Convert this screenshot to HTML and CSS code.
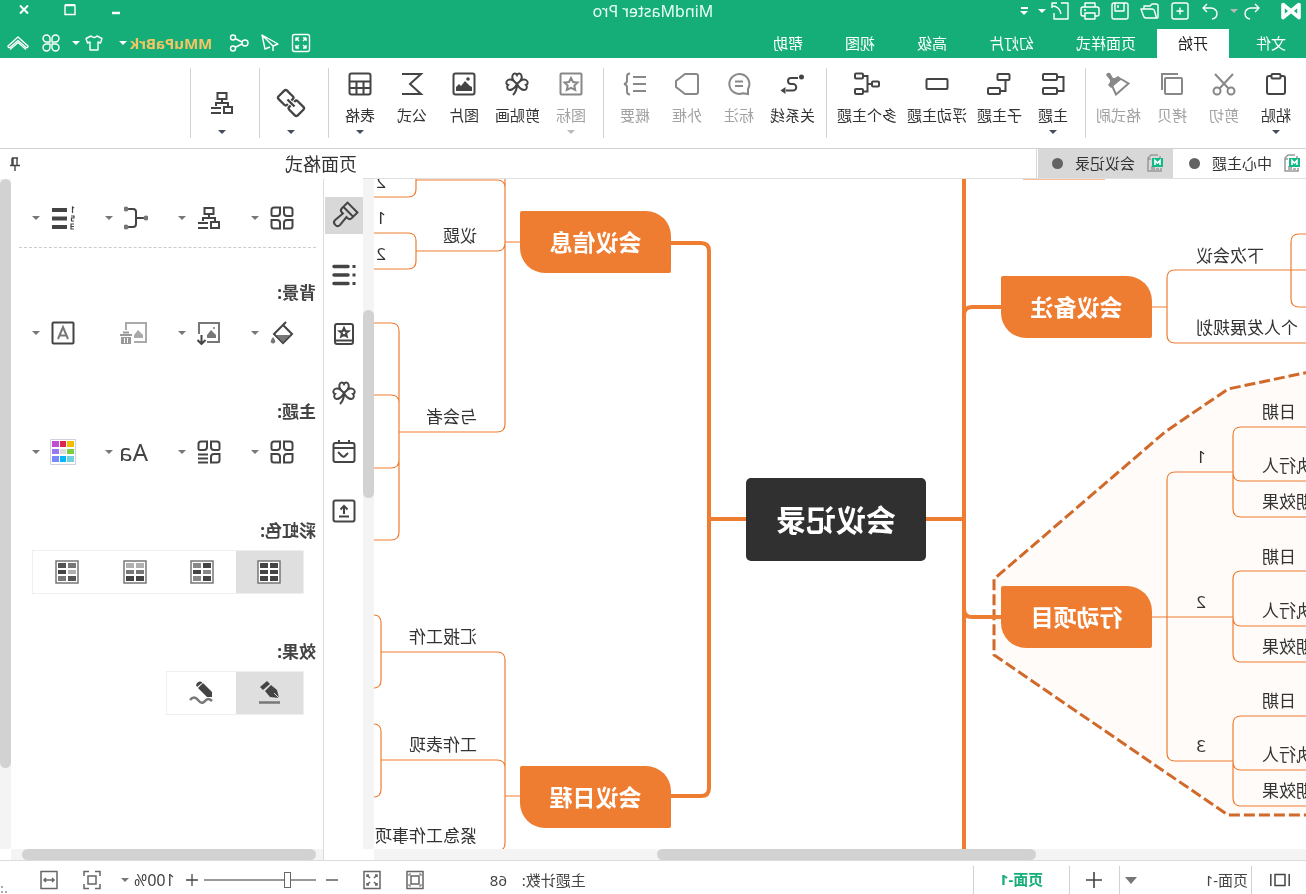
FILE: index.html
```html
<!DOCTYPE html>
<html lang="zh-CN">
<head>
<meta charset="utf-8">
<title>MindMaster Pro</title>
<link rel="stylesheet" href="styles.css">
</head>
<body>
<svg class="defs" aria-hidden="true">
  <symbol id="clover" viewBox="0 0 24 24"><path d="M12 12C8 9 6.500 6.500 7.500 3.500 8.500 1 11 1 12 3c1-2 3.500-2 4.500.5C17.500 6.500 16 9 12 12zM12 12C8.500 8 5.500 6.500 3 8c-2.500 1.500-2 4.500 0 5-1.500 1.500-1 4.500 1.500 5C8 18 10 16 12 12zM12 12c3.500-4 6.500-5.500 9-4 2.500 1.500 2 4.500 0 5 1.500 1.500 1 4.500-1.500 5-3.500 0-5.500-2-7.500-6zM12 12c0 4 1 8 4 11"/></symbol>
  <symbol id="structure" viewBox="0 0 24 24"><rect x="7.500" y="2" width="9" height="6"/><path d="M12 8v4M6 15v-3h12v3M13 17h10M13 22h10"/><rect x="2" y="16" width="8" height="6"/></symbol>
  <symbol id="squares" viewBox="0 0 24 24"><path d="M4 1.500h6V7a3 3 0 0 1-3 3H3Q1.500 10 1.500 8.500V4Q1.500 1.500 4 1.500zM14 1.500h6q2.500 0 2.500 2.500v4.500q0 1.500-1.500 1.500h-4a3 3 0 0 1-3-3zM1.500 14H7a3 3 0 0 1 3 3v5.500H4q-2.500 0-2.500-2.500zM17 14h5.500v6q0 2.500-2.500 2.500h-6V17a3 3 0 0 1 3-3z"/></symbol>
  <symbol id="docfile" viewBox="0 0 16 18"><path d="M5 1h7l3 3v13H2v-3M4 15h3M8 13h4M8 15h4M12 5h3M3 4V2" fill="none" stroke="#999" stroke-width="1.500"/><path d="M0 4h11v9H0z" fill="#12b886" stroke="none"/><path d="M3 11V6.500l2.500 2.500L8 6.500V11" fill="none" stroke="#fff" stroke-width="1.600"/></symbol>
</svg>
<div class="app">
  <header class="titlebar">
    <div class="quick">
      <svg class="logo" viewBox="0 0 22 20"><path d="M3 16.500v-13l16 13v-13l-16 13z" fill="none" stroke="#fff" stroke-width="3.600" stroke-linejoin="round"/></svg>
      <div class="pair">
        <button class="qb" aria-label="撤销"><svg viewBox="0 0 20 20"><path d="M7 3L3 7l4 4M3 7h8a6 5.500 0 0 1 6 5.500c0 3-2 5-5 5.500"/></svg></button>
        <i class="caret dim"></i>
      </div>
      <button class="qb" aria-label="重做"><svg viewBox="0 0 20 20"><path d="M13 3l4 4-4 4M17 7H9a6 5.500 0 0 0-6 5.500c0 3 2 5 5 5.500"/></svg></button>
      <button class="qb" aria-label="新建"><svg viewBox="0 0 20 20"><rect x="2" y="2" width="16" height="16" rx="2"/><path d="M10 6.500v7M6.500 10h7"/></svg></button>
      <button class="qb" aria-label="打开"><svg viewBox="0 0 20 20"><path d="M2 16V5q0-2 2-2h4l2 2h6v3M2 16q0 1 1 1h11q2 0 2.500-2L19 8H8q-2 0-2.500 2L3.500 17"/></svg></button>
      <button class="qb" aria-label="保存"><svg viewBox="0 0 20 20"><path d="M4 2h12q2 0 2 2v12q0 2-2 2H4q-2 0-2-2V4q0-2 2-2zM6 2v8h9V2M12 4v3"/></svg></button>
      <button class="qb" aria-label="打印"><svg viewBox="0 0 20 20"><path d="M5 6V2h10v4M5 15H3q-2 0-2-2V8q0-2 2-2h14q2 0 2 2v5q0 2-2 2h-2M5 12h10v6H5zM14 9h2"/></svg></button>
      <div class="pair">
        <button class="qb" aria-label="导出"><svg viewBox="0 0 20 20"><path d="M9 2H2v16h14v-6M18 5c-6 0-8 3-9 8M13 2h5v5"/></svg></button>
        <i class="caret"></i>
      </div>
      <button class="more" aria-label="自定义"><i class="caret"></i></button>
    </div>
    <h1 class="title">MindMaster Pro</h1>
    <div class="winctl">
      <button aria-label="最小化"><svg viewBox="0 0 12 12"><path d="M2 9h8" stroke-width="2.500"/></svg></button>
      <button aria-label="最大化"><svg viewBox="0 0 12 12"><path d="M1 1.500h10v9H1z"/><path d="M1 1h10" stroke-width="2"/></svg></button>
      <button aria-label="关闭"><svg viewBox="0 0 12 12"><path d="M2 1.500l8 8M10 1.500l-8 8" stroke-width="2"/></svg></button>
    </div>
  </header>
  <nav class="menubar">
    <button class="tab file">文件</button><button class="tab on">开始</button><button class="tab">页面样式</button><button class="tab">幻灯片</button><button class="tab">高级</button><button class="tab">视图</button><button class="tab">帮助</button>
    <div class="account">
      <button class="qb" aria-label="全屏"><svg viewBox="0 0 20 20"><rect x="1.500" y="1.500" width="17" height="17" rx="2"/><path d="M5 8V5h3M12 5h3v3M15 12v3h-3M8 15H5v-3M5 5l3 3M15 5l-3 3M15 15l-3-3M5 15l3-3"/></svg></button>
      <button class="qb" aria-label="发送"><svg viewBox="0 0 20 20"><path d="M18 2L2 11l5 2zM18 2l-3 14-5-2M7 13v5"/></svg></button>
      <button class="qb" aria-label="分享"><svg viewBox="0 0 20 20"><circle cx="4" cy="10" r="3"/><circle cx="16" cy="4.500" r="2.500"/><circle cx="16" cy="15.500" r="2.500"/><path d="M7 9l7-3.500M7 11l7 3.500"/></svg></button>
      <button class="user">MMuPaBrk<i class="caret"></i></button>
      <button class="qb skin" aria-label="皮肤"><svg viewBox="0 0 20 20"><path d="M7 3L2 5.500 3.500 10 6 9v8h8V9l2.500 1L18 5.500 13 3q-3 3-6 0z"/></svg><i class="caret"></i></button>
      <button class="qb" aria-label="应用"><svg viewBox="0 0 20 20"><path d="M9 9H5.500A3.500 3.500 0 1 1 9 5.500zM11 9V5.500A3.500 3.500 0 1 1 14.500 9zM9 11v3.500A3.500 3.500 0 1 1 5.500 11zM11 11h3.500a3.500 3.500 0 1 1-3.500 3.500z"/></svg></button>
      <button class="qb" aria-label="收起"><svg class="wide" viewBox="0 0 24 20"><path d="M2 13L12 4l10 9q0 2-2 1.500l-8-7-8 7Q2 15 2 13z"/><path d="M4 16.500l8-7 8 7"/></svg></button>
    </div>
  </nav>

  <div class="ribbon">
    <button class="tool"><svg viewBox="0 0 24 24"><rect x="3" y="4" width="18" height="18" rx="2"/><rect x="7.500" y="2" width="9" height="4.500" rx="1" fill="#fff"/></svg>粘贴<i class="caret"></i></button>
    <button class="tool" disabled><svg viewBox="0 0 24 24"><circle cx="5" cy="19" r="3.500"/><circle cx="19" cy="19" r="3.500"/><path d="M7.500 16.500L21 2M16.500 16.500L3 2"/></svg>剪切</button>
    <button class="tool" disabled><svg viewBox="0 0 24 24"><rect x="2" y="6" width="17" height="16" rx="1"/><path d="M6 2h16v16"/></svg>拷贝</button>
    <button class="tool" disabled><svg viewBox="0 0 24 24"><path d="M9 7L1.500 11.500 14 22.500l4.500-10"/><path d="M8 7l4-3 3 2 2 0 3-5q3-1 4 2l-4 5 0 2 2 3-3 3z" class="fill"/></svg>格式刷</button>
    <i class="sep"></i>
    <button class="tool"><svg viewBox="0 0 24 24"><rect x="8" y="2" width="14" height="6" rx="1"/><rect x="8" y="16" width="14" height="6" rx="1"/><path d="M8 5H1.500v14H8"/></svg>主题<i class="caret"></i></button>
    <button class="tool"><svg viewBox="0 0 24 24"><rect x="1.500" y="2" width="12" height="6" rx="1"/><rect x="11" y="16" width="12" height="6" rx="1"/><path d="M5.500 8v11H11"/></svg>子主题</button>
    <button class="tool"><svg viewBox="0 0 24 24"><rect x="1.500" y="7" width="21" height="10" rx="1"/></svg>浮动主题</button>
    <button class="tool"><svg class="spread" viewBox="-1 0 26 24"><rect x="0" y="9.500" width="7" height="5" rx="1"/><rect x="16" y="1.500" width="8" height="5" rx="1"/><rect x="16" y="17" width="8" height="5" rx="1"/><path d="M7 12h4M16 4h-4.500v15.500H16"/></svg>多个主题</button>
    <i class="sep"></i>
    <button class="tool"><svg viewBox="0 0 24 24"><path d="M6 6h7a3 3 0 0 1 0 6h-2a3.200 3.200 0 0 0 0 6.500h7"/><circle cx="2.500" cy="5" r="2.500" class="fill"/><path d="M18.500 15l5 3.500-5 3.500z" class="fill"/></svg>关系线</button>
    <button class="tool" disabled><svg viewBox="0 0 24 24"><path d="M3 22v-5a10 10 0 1 1 5 4.300zM8 9.500h8M8 14h8"/></svg>标注</button>
    <button class="tool" disabled><svg viewBox="0 0 24 24"><path d="M3 2h11l9 7v6l-9 7H3q-2 0-2-2V4q0-2 2-2z"/></svg>外框</button>
    <button class="tool" disabled><svg viewBox="0 0 24 24"><path d="M1 5h13M1 12h13M1 19h13M17 1.500q3 0 3 3v4q0 3 3 3.500-3 .5-3 3.500v4q0 3-3 3"/></svg>概要</button>
    <i class="sep"></i>
    <button class="tool" disabled><svg viewBox="0 0 24 24"><rect x="1.500" y="1.500" width="21" height="21" rx="1"/><path d="M12 6l2 4 4.500.5-3.200 3 .9 4.500-4.200-2.200L7.800 18l.9-4.500-3.200-3L10 10z"/></svg>图标<i class="caret"></i></button>
    <button class="tool"><svg><use href="#clover"/></svg>剪贴画</button>
    <button class="tool"><svg viewBox="0 0 24 24"><rect x="1.500" y="1.500" width="21" height="21" rx="2"/><path d="M4 19v-4l2-1 5-5 4 5 2-2 3 3v4z" class="fill"/><circle cx="8" cy="7" r="1.800" class="fill"/></svg>图片</button>
    <button class="tool"><svg viewBox="0 0 24 24"><path d="M22 2H3l11 10L3 22h19"/></svg>公式</button>
    <button class="tool"><svg viewBox="0 0 24 24"><rect x="1.500" y="1.500" width="21" height="21" rx="2"/><path d="M1.500 9.500h21M1.500 16h21M8.500 9.500V22M15.500 9.500V22"/></svg>表格<i class="caret"></i></button>
    <i class="sep"></i>
    <button class="tool big" aria-label="链接"><svg viewBox="0 0 24 24"><g transform="rotate(-45 12 12)"><path d="M10.500 14v2q0 2-2 2H.5q-2 0-2-2V8q0-2 2-2h8q2 0 2 2v1M13.500 10V8q0-2 2-2h8q2 0 2 2v8q0 2-2 2h-8q-2 0-2-2v-1M7 12h10" stroke-width="2.300"/></g></svg><i class="caret"></i></button>
    <i class="sep"></i>
    <button class="tool big" aria-label="布局"><svg><use href="#structure"/></svg><i class="caret"></i></button>
    <i class="sep"></i>
  </div>

  <main class="main">
    <section class="work">
      <div class="docs">
        <button class="doc first"><svg><use href="#docfile"/></svg>中心主题<i class="dot"></i></button>
        <button class="doc on"><svg><use href="#docfile"/></svg>会议记录<i class="dot"></i></button>
      </div>
      <div class="view">
        <div class="canvas">
          <svg class="links" viewBox="0 179 932 670">
            <path class="zone" d="M-8 371L78 389 141 432 312 579V655L78 815H-8"/>
            <g class="thin">
              <path d="M154 307H139M-8 270H131q8 0 8 8V335q0 8-8 8H-8M-8 234H7q8 0 8 8v57q0 8-8 8H-8"/>
              <path d="M154 617H73M73 472h58q8 0 8 8V753q0 8-8 8H73"/>
              <path d="M-8 427H65q8 0 8 8v74q0 8-8 8H-8M73 473q0 8-8 8H-8"/>
              <path d="M-8 571H65q8 0 8 8v75q0 8-8 8H-8M73 618q0 8-8 8H-8"/>
              <path d="M-8 716H65q8 0 8 8v74q0 8-8 8H-8M73 762q0 8-8 8H-8"/>
              <path d="M786 242h15M801 170V424q0 8 8 8h98M801 188q0-8 8-8h81M801 243q0 8 8 8h81"/>
              <path d="M890 170v19q0 8 8 8h34M932 233h-34q-8 0-8 8v20q0 8 8 8h34"/>
              <path d="M932 323h-17q-8 0-8 8V532q0 8 8 8h17M932 395h-17q-8 0-8 8M932 468h-17q-8 0-8-8"/>
              <path d="M786 796h15M925 652H809q-8 0-8 8V843q0 8 8 8M925 760H809q-8 0-8 8"/>
              <path d="M932 615q-7 0-7 8v57q0 8 7 8M932 724q-7 0-7 8v57q0 8 7 8M201 179h82"/>
            </g>
            <g class="trunk">
              <path d="M380 519H342M342 170V860M342 315q0-8-8-8H305M342 609q0 8-8 8H305"/>
              <path d="M560 519h37M635 243h-30q-8 0-8 8V788q0 8 8 8h30"/>
            </g>
          </svg>
          <div class="root">会议记录</div>
          <div class="node n1">会议备注</div>
          <div class="node n2">行动项目</div>
          <div class="node n3">会议信息</div>
          <div class="node n4">会议日程</div>
          <span class="leaf east e1">下次会议</span>
          <span class="leaf east e2">个人发展规划</span>
          <span class="leaf num a0">1</span><span class="leaf num b0">2</span><span class="leaf num c0">3</span>
          <span class="leaf far a1">日期</span><span class="leaf far a2">执行人</span><span class="leaf far a3">预期效果</span>
          <span class="leaf far b1">日期</span><span class="leaf far b2">执行人</span><span class="leaf far b3">预期效果</span>
          <span class="leaf far c1">日期</span><span class="leaf far c2">执行人</span><span class="leaf far c3">预期效果</span>
          <span class="leaf idx i1">2</span><span class="leaf idx i2">1</span><span class="leaf idx i3">2</span>
          <span class="leaf west w1">议题</span>
          <span class="leaf west w2">与会者</span>
          <span class="leaf west w3">汇报工作</span>
          <span class="leaf west w4">工作表现</span>
          <span class="leaf west w5">紧急工作事项</span>
        </div>
        <div class="vbar"><i class="vt1"></i></div>
        <div class="hbar"><i class="ht1"></i></div>
      </div>
    </section>

    <aside class="panel">
      <header class="phead"><h2>页面格式</h2>
        <button class="pin" aria-label="固定"><svg viewBox="0 0 12 14"><path d="M3 1h6M4 1v7M8 1v7M9 1v7M1 8.500h10M6 9v5"/></svg></button>
      </header>
      <div class="pbody">
        <div class="rail">
          <button class="on" aria-label="格式"><svg viewBox="0 0 24 24"><g transform="rotate(-45 12 12)"><path d="M5 0h14v8q0 3-3 3h-1.500l1 10q0 3.500-3.500 3.500T8.500 21l1-10H8q-3 0-3-3zM5 6h14"/></g></svg></button>
          <button aria-label="大纲"><svg viewBox="0 0 24 24"><path d="M8 3.500h14M8 12h14M8 20.500h14" stroke-width="3.500" stroke-linecap="round"/><path d="M.5 3.500h3M.5 12h3M.5 20.500h3" stroke-width="3"/></svg></button>
          <button aria-label="图标"><svg viewBox="0 0 24 24"><rect x="3" y="2" width="18" height="20" rx="2"/><path d="M3 18.500h18"/><path d="M12 6l1.300 3 3.200.3-2.500 2 .8 3.200-2.800-1.700-2.800 1.700.8-3.200-2.500-2 3.200-.3z"/></svg></button>
          <button aria-label="剪贴画"><svg><use href="#clover"/></svg></button>
          <button aria-label="任务"><svg viewBox="0 0 24 24"><rect x="1.500" y="3" width="21" height="19" rx="2"/><path d="M1.500 8h21M7 0v4M17 0v4M6 12l4 4q1.500 1.500 3 0l3-3" transform="matrix(-1 0 0 1 24 0)"/></svg></button>
          <button aria-label="导出"><svg viewBox="0 0 24 24"><rect x="1.500" y="1.500" width="21" height="21" rx="2"/><path d="M7 17.500h10M12 15V8M8.500 10.500L12 7l3.500 3.500"/></svg></button>
        </div>
        <div class="props">
          <div class="scroll">
          <div class="row top">
            <button class="opt" aria-label="布局样式"><svg><use href="#squares"/></svg><i class="caret"></i></button>
            <button class="opt" aria-label="结构"><svg><use href="#structure"/></svg><i class="caret"></i></button>
            <button class="opt" aria-label="连线"><svg viewBox="0 0 24 24"><path d="M4 12h8M20 3h-5q-3 0-3 3v12q0 3 3 3h5"/><circle cx="2" cy="12" r="2.500" class="grey"/><circle cx="22" cy="3" r="2.500" class="grey"/><circle cx="22" cy="21" r="2.500" class="grey"/></svg><i class="caret"></i></button>
            <button class="opt" aria-label="编号"><svg viewBox="0 0 24 24"><path d="M8 4h15M8 12.500h15M8 21h15" stroke-width="4"/><path d="M1 2l1.500-1v6M4 10H1v2h2.500v3H1M1 18h3v5H1M1 20.500h3" stroke-width="1.200"/></svg><i class="caret"></i></button>
          </div>
          <h3>背景:</h3>
          <div class="row">
            <button class="opt" aria-label="填充"><svg viewBox="0 0 24 24"><path d="M10 3l10 10-9 9-9-9 9-9M8 1l4 4"/><path d="M4 14h14l-7 7z" class="grey"/><path d="M21 16q3 4 2 5.500-2 2-4 0-1-2 2-5.500z" class="grey"/></svg><i class="caret"></i></button>
            <button class="opt" aria-label="图片背景"><svg viewBox="0 0 24 24"><path d="M14 21H2V2h20v11" stroke="#777"/><path d="M5 17v-3l5-5 4 5v3z" class="grey"/><circle cx="7" cy="7" r="1" class="grey"/><path d="M19.500 14v9M15.500 19l4 4 4-4"/></svg><i class="caret"></i></button>
            <button class="opt" disabled aria-label="删除背景"><svg class="trash" viewBox="0 0 28 24"><path d="M14 21H2V2h20v7" stroke="#aaa"/><path d="M5 17v-3l5-5 4 5v3z" class="pale"/><path d="M16 14h12M19 11.500h6"/><path d="M17 16h10v7H17z" class="fill"/><path d="M20.500 17v5M23.500 17v5" stroke="#fff" stroke-width="1"/></svg></button>
            <button class="opt" aria-label="水印"><svg viewBox="0 0 24 24"><rect x="1.500" y="1.500" width="21" height="21" rx="1"/><path d="M7 18l5-12 5 12M8.500 14.500h7" stroke="#777"/></svg><i class="caret"></i></button>
          </div>
          <h3>主题:</h3>
          <div class="row">
            <button class="opt" aria-label="主题"><svg><use href="#squares"/></svg><i class="caret"></i></button>
            <button class="opt" aria-label="主题样式"><svg viewBox="0 0 24 24"><path d="M4 1.500h6V7a3 3 0 0 1-3 3H3Q1.500 10 1.500 8.500V4Q1.500 1.500 4 1.500zM14 1.500h6q2.500 0 2.500 2.500v4.500q0 1.500-1.500 1.500h-4a3 3 0 0 1-3-3zM1.500 14H7a3 3 0 0 1 3 3v5.500H4q-2.500 0-2.500-2.500zM13 14.500h10M13 18.500h10M13 22.500h10"/></svg><i class="caret"></i></button>
            <button class="opt font"><span>Aa</span><i class="caret"></i></button>
            <button class="opt" aria-label="颜色"><svg class="palette" viewBox="0 0 26 26"><path d="M.5.5h25v25H.5z" fill="#fff" stroke="#ccd0e0" stroke-width="1"/><g stroke="none"><path fill="#f0c000" d="M2 2h7v6H2z"/><path fill="#dc2850" d="M10 2h6v6h-6z"/><path fill="#c050d0" d="M17 2h7v6h-7z"/><path fill="#78d040" d="M2 10h7v5H2z"/><path fill="#ddd" d="M10 10h6v5h-6z"/><path fill="#9878f0" d="M17 10h7v5h-7z"/><path fill="#70d0e0" d="M2 17h7v6H2z"/><path fill="#00b8f8" d="M10 17h6v6h-6z"/><path fill="#7888ff" d="M17 17h7v6h-7z"/></g></svg><i class="caret"></i></button>
          </div>
          <h3>彩虹色:</h3>
          <div class="seg">
            <button class="on" aria-label="彩虹色一"><svg viewBox="0 0 24 24"><path class="frame" d="M1 1h22v22H1z"/><g stroke="none" fill="#444"><path d="M3 3h8v5H3zM13 3h8v5h-8zM3 10h8v4H3zM13 10h8v4h-8zM3 16h8v5H3zM13 16h8v5h-8z"/></g></svg></button>
            <button aria-label="彩虹色二"><svg viewBox="0 0 24 24"><path class="frame" d="M1 1h22v22H1z"/><g stroke="none"><path fill="#444" d="M3 3h8v5H3zM13 10h8v4h-8zM3 16h8v5H3z"/><path fill="#888" d="M13 3h8v5h-8zM3 10h8v4H3zM13 16h8v5h-8z"/></g></svg></button>
            <button aria-label="彩虹色三"><svg viewBox="0 0 24 24"><path class="frame" d="M1 1h22v22H1z"/><g stroke="none"><path fill="#b0b0b0" d="M3 3h8v5H3zM13 3h8v5h-8z"/><path fill="#777" d="M3 10h8v4H3zM13 10h8v4h-8z"/><path fill="#444" d="M3 16h8v5H3zM13 16h8v5h-8z"/></g></svg></button>
            <button aria-label="彩虹色四"><svg viewBox="0 0 24 24"><path class="frame" d="M1 1h22v22H1z"/><g stroke="none"><path fill="#777" d="M3 3h8v5H3zM13 16h8v5h-8z"/><path fill="#b0b0b0" d="M3 10h8v4H3z"/><path fill="#555" d="M13 3h8v5h-8zM3 16h8v5H3z"/><path fill="#444" d="M13 10h8v4h-8z"/></g></svg></button>
          </div>
          <h3 class="fx">效果:</h3>
          <div class="seg">
            <button class="on" aria-label="钢笔"><svg viewBox="0 0 24 24"><path d="M2 17l2-8 6-5 6 6-5 6z" class="fill"/><path d="M11 3l3-3 7 6-3 3z" class="fill"/><path d="M2 17l5-5" stroke="#e0e0e0" stroke-width="1"/><path d="M1 21.500h21" stroke="#777" stroke-width="2.500"/></svg></button>
            <button aria-label="手绘"><svg viewBox="0 0 24 24"><path d="M1 16v-5l9-9 5 5-9 9z" class="fill"/><path d="M11 1q4-2 6 3l-1 2-5-4z" class="fill"/><path d="M1 20q4-4 7 0t7-1 8 0" stroke="#777" stroke-width="2.500"/></svg></button>
          </div>
          </div>
          <div class="vbar"><i class="vt2"></i></div>
          <div class="hbar"><i class="ht2"></i></div>
        </div>
      </div>
    </aside>
  </main>

  <footer class="status">
    <button class="pageicon" aria-label="页面"><svg viewBox="0 0 20 14"><path d="M5 1.500h10v11H5zM.8 1v12M19.200 1v12"/></svg></button>
    <button class="pagesel">页面-1<i class="caret"></i></button>
    <button class="add" aria-label="添加页面"><svg viewBox="0 0 16 16"><path d="M8 0v16M0 8h16"/></svg></button>
    <button class="page">页面-1</button>
    <div class="count">主题计数: <span>68</span></div>
    <button class="sb" aria-label="适应页面"><svg viewBox="0 0 18 20"><rect x="1" y="1.500" width="16" height="17"/><rect x="5" y="6" width="8" height="8"/><path d="M3 6V4h2M13 4h2v2M15 14v2h-2M5 16H3v-2" stroke-width="1"/></svg></button>
    <button class="sb" aria-label="全屏显示"><svg viewBox="0 0 18 20"><rect x="1" y="1.500" width="16" height="17"/><path d="M4 7V5h2M12 5h2v2M14 13v2h-2M6 15H4v-2M4 5l3 3M14 5l-3 3M14 15l-3-3M4 15l3-3"/></svg></button>
    <button class="zoomb" aria-label="缩小"><svg viewBox="0 0 12 12"><path d="M0 6h12"/></svg></button>
    <input class="zoom" type="range" min="0" max="100" value="24" aria-label="缩放">
    <button class="zoomb" aria-label="放大"><svg viewBox="0 0 12 12"><path d="M0 6h12M6 0v12"/></svg></button>
    <button class="pct">100%<i class="caret"></i></button>
    <button class="sb" aria-label="居中"><svg viewBox="0 0 18 20"><path d="M1 6V1.500h5M12 1.500h5V6M17 14v4.500h-5M6 18.500H1V14"/><rect x="5" y="6" width="8" height="8"/></svg></button>
    <button class="sb last" aria-label="适应宽度"><svg viewBox="0 0 18 20"><rect x="1" y="1.500" width="16" height="17"/><path d="M4 10h10M6 8l-2 2 2 2M12 8l2 2-2 2"/></svg></button>
    <svg class="grip" viewBox="0 0 8 8"><path d="M5 0h2v2H5zM5 5h2v2H5zM1 5h2v2H1z" fill="#aaa"/></svg>
  </footer>
</div>
</body>
</html>
```
FILE: styles.css
```css
* { box-sizing: border-box; }
body {
  margin: 0;
  background: #fff;
  font-family: "Noto Sans", "Noto Sans CJK SC", sans-serif;
  font-size: 15px;
  line-height: 20px;
  color: #333;
}
button { font: inherit; color: inherit; background: none; border: 0; padding: 0; margin: 0; }
h1, h2, h3 { margin: 0; font-weight: 400; }
svg { display: block; fill: none; stroke: currentColor; stroke-width: 2; flex: none; }
.defs { position: absolute; width: 0; height: 0; }
.fill { fill: currentColor; stroke: none; }
.grey { fill: #777; stroke: none; }
.pale { fill: #aaa; stroke: none; }
.caret {
  display: block;
  flex: none;
  border: 4px solid transparent;
  border-top-color: currentColor;
  border-bottom: 0;
}

/* The whole window is shown flipped left to right. */
.app { height: 100vh; display: flex; flex-direction: column; transform: scaleX(-1); overflow: hidden; }

.titlebar { height: 29px; flex: none; display: grid; grid-template-columns: 1fr auto 1fr; background: #15ae78; color: #fff; }
.quick { display: flex; align-items: center; gap: 10px; padding: 0 0 7px 4px; }
.logo { width: 22px; height: 20px; margin-right: 8px; stroke: none; }
.pair { display: flex; align-items: center; gap: 4px; }
.qb svg { width: 20px; height: 20px; stroke-width: 1.4; stroke-linejoin: round; }
.qb svg.wide { width: 24px; }
.dim { color: #b9b9b9; }
.more { width: 7px; border-top: 2px solid #fff; padding-top: 2px; }
.title { font-size: 16px; line-height: 23px; color: #e8fff6; }
.winctl { display: flex; justify-content: flex-end; padding-right: 1px; }
.winctl button { width: 46px; height: 20px; display: grid; place-items: center; }
.winctl svg { width: 12px; height: 12px; stroke-width: 1.4; }

.menubar { height: 29px; flex: none; display: flex; background: #15ae78; color: #fff; }
.tab { padding: 0 21px 2px; height: 29px; }
.tab.file { padding: 0 27px 2px 20px; }
.tab.on { background: #fff; color: #222; }
.account { margin-left: auto; padding: 0 6px 1px 0; display: flex; align-items: center; gap: 11px; }
.user { display: flex; align-items: center; gap: 3px; margin: 0 4px 0 6px; font-weight: 700; color: #f5c563; }
.user .caret { color: #fff; }
.skin { display: flex; align-items: center; gap: 4px; }

.ribbon { height: 91px; flex: none; display: flex; align-items: flex-start; padding: 10px 0 0 4px; border-bottom: 1px solid #d2d2d2; color: #444; }
.tool { min-width: 52px; padding: 4px 5px 0; display: flex; flex-direction: column; align-items: center; white-space: nowrap; color: #333; }
.tool svg { width: 24px; height: 24px; margin-bottom: 9px; color: #444; }
.tool svg.spread { width: 26px; }
.tool .caret { margin-top: 5px; color: #444c5e; }
.tool:disabled { color: #a2a2a2; }
.tool:disabled svg { color: #888; }
.tool:disabled .caret { color: #bbb; }
.tool.big { width: 57px; padding: 23px 0 0 4px; }
.tool.big .caret { margin-top: 6px; }
.tool.big svg { overflow: visible; }
.sep { width: 1px; height: 70px; margin: 0 6px 0 5px; background: #d2d2d2; flex: none; }

.main { flex: 1; min-height: 0; display: grid; grid-template-columns: minmax(0, 1fr) 363px; }
.work { display: flex; flex-direction: column; min-height: 0; }
.docs { height: 30px; flex: none; display: flex; border-bottom: 1px solid #e0e0e0; }
.doc { display: flex; align-items: center; gap: 12px; padding: 0 14px 1px 10px; }
.doc.first { padding: 0 16px 1px 6px; }
.doc.on { background: #d8d8d8; box-shadow: 1px 0 #fff, 2px 0 #d8d8d8; }
.doc svg { width: 16px; height: 18px; }
.dot { width: 11px; height: 11px; border-radius: 50%; background: #636363; }

.view { flex: 1; min-height: 0; display: grid; grid-template: minmax(0, 1fr) 11px / minmax(0, 1fr) 11px; }
.canvas { position: relative; overflow: hidden; }
.vbar, .hbar { background: #f4f4f4; position: relative; }
.vbar i, .hbar i { position: absolute; border-radius: 6px; background: #d2d2d2; }
.vt1 { top: 131px; height: 188px; width: 11px; }
.ht1 { left: 270px; width: 379px; height: 11px; }
.vt2 { top: 0; height: 589px; width: 11px; }
.ht2 { left: 7px; width: 294px; height: 11px; }

.links { position: absolute; left: 0; top: 0; width: 932px; height: 670px; overflow: visible; }
.thin { stroke: #ee7d31; stroke-width: 1.2; }
.trunk { stroke: #ee7d31; stroke-width: 4; }
.zone { fill: #fffbf8; stroke: #d0692a; stroke-width: 3; stroke-dasharray: 11 4; }
.root, .node { position: absolute; display: grid; place-items: center; color: #fff; font-weight: 700; }
.root { left: 380px; top: 299px; width: 180px; height: 83px; border-radius: 5px; background: #303030; font-size: 30px; }
.node { width: 151px; height: 62px; border-radius: 25px 2px 25px 2px; background: #ee7d31; font-size: 23px; }
.n1 { left: 154px; top: 97px; }
.n2 { left: 154px; top: 407px; }
.n3 { left: 635px; top: 32px; }
.n4 { left: 635px; top: 587px; }
.leaf { position: absolute; font-size: 17px; line-height: 24px; white-space: nowrap; }
.east { right: calc(100% - 110px); }
.far { right: calc(100% - 44px); }
.num { left: 100px; }
.west { left: 829px; }
.idx { left: 920px; }
.e1 { top: 65px; }
.e2 { top: 137px; }
.a0 { top: 266px; }
.b0 { top: 411px; }
.c0 { top: 555px; }
.a1 { top: 221px; }
.a2 { top: 275px; }
.a3 { top: 311px; }
.b1 { top: 366px; }
.b2 { top: 420px; }
.b3 { top: 456px; }
.c1 { top: 510px; }
.c2 { top: 564px; }
.c3 { top: 600px; }
.i1 { top: -9px; }
.i2 { top: 27px; }
.i3 { top: 63px; }
.w1 { top: 45px; }
.w2 { top: 226px; }
.w3 { top: 446px; }
.w4 { top: 554px; }
.w5 { top: 645px; }

.panel { display: flex; flex-direction: column; min-height: 0; color: #444; }
.phead { height: 30px; flex: none; display: flex; align-items: center; justify-content: space-between; padding: 0 9px 0 6px; }
.phead h2 { font-size: 18px; color: #333; }
.pin svg { width: 12px; height: 14px; stroke-width: 1.4; }
.pbody { flex: 1; min-height: 0; display: flex; }
.rail { width: 40px; flex: none; border-right: 1px solid #dcdcdc; padding: 18px 0 0; display: flex; flex-direction: column; gap: 22px; }
.rail button { width: 38px; height: 37px; display: grid; place-items: center; }
.rail .on { background: #d8d8d8; }
.rail svg { width: 24px; height: 24px; overflow: visible; }
.props { flex: 1; min-width: 0; display: grid; grid-template: minmax(0, 1fr) 11px / minmax(0, 1fr) 11px; }
.scroll { overflow: hidden; padding: 22px 8px 0 7px; }
.row { display: flex; height: 34px; padding-left: 22px; }
.row.top { height: 47px; padding-bottom: 13px; border-bottom: 1px dashed #ccc; }
.opt { width: 73px; display: flex; align-items: center; gap: 11px; flex: none; }
.row .opt:last-child { width: 40px; }
.opt svg { width: 24px; height: 24px; }
.opt svg.trash { width: 28px; }
.opt svg.palette { width: 26px; height: 26px; margin: 0 -1px; }
.opt .caret { color: #777; }
.opt:disabled { color: #999; }
.font { gap: 6px; }
.font span { font-size: 24px; width: 29px; }
.props h3 { font-size: 17px; line-height: 24px; font-weight: 700; margin-bottom: 11px; }
.row + h3 { margin-top: 50px; }
.row.top + h3 { margin-top: 33px; }
.seg { display: inline-flex; border: 1px solid #efefef; margin-left: 12px; }
.seg button { width: 67px; height: 42px; display: grid; place-items: center; }
.seg button:last-child { width: 69px; }
.seg .on { background: #dfdfdf; }
.seg svg { width: 24px; height: 24px; }
.props .seg { vertical-align: top; margin-top: -4px; }
.frame { fill: #fff; stroke: #777; stroke-width: 1.5; }
.props .fx { margin-top: 46px; }

.status { height: 34px; flex: none; display: flex; align-items: center; border-top: 1px solid #dcdcdc; color: #444; padding: 5px 0 0; }
.status button { height: 28px; display: flex; align-items: center; flex: none; }
.pageicon { width: 55px; padding-left: 16px; border-right: 1px solid #d2d2d2; }
.pageicon svg { width: 20px; height: 14px; stroke-width: 1.5; }
.pagesel { width: 132px; padding: 0 5px 0 3px; justify-content: space-between; border-right: 1px solid #d2d2d2; }
.pagesel .caret { border-width: 7px 6px 0; color: #777; }
.add { width: 50px; justify-content: center; border-right: 1px solid #d2d2d2; }
.add svg { width: 16px; height: 16px; stroke-width: 1.6; }
.page { width: 96px; padding-bottom: 2px; justify-content: center; border-right: 1px solid #d2d2d2; font-weight: 700; color: #15ae78; }
.count { margin-left: auto; margin-right: 66px; }
.count span { margin-left: 11px; }
.sb { margin-right: 25px; }
.sb svg { width: 18px; height: 20px; stroke-width: 1.5; color: #666; }
.sb.last { margin-right: 40px; }
.zoomb { width: 12px; }
.zoomb svg { width: 12px; height: 12px; stroke-width: 1.3; }
.zoom { appearance: none; width: 112px; height: 18px; margin: 0 6px 0 10px; background: linear-gradient(#999, #999) center / 100% 2px no-repeat; }
.zoom::-webkit-slider-thumb { appearance: none; width: 7px; height: 16px; border: 1px solid #666; background: #fff; }
.pct { gap: 5px; margin: 0 20px 0 11px; font-size: 16px; }
.pct .caret { color: #777; }
.grip { position: absolute; right: 0; bottom: 0; width: 8px; height: 8px; stroke: none; }
```
